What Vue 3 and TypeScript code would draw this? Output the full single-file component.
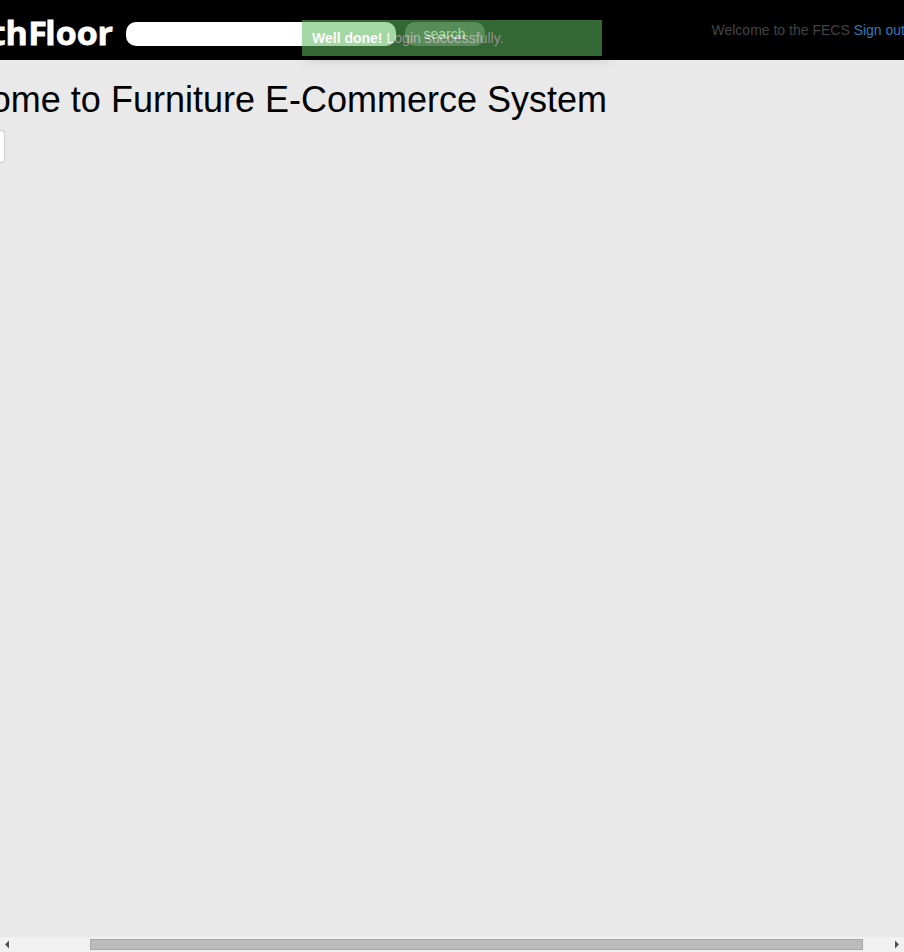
<script setup lang="ts">
import { ref } from 'vue'

const query = ref('')
const username = 'FECS'
</script>

<template>
  <div class="viewport">
    <header class="topbar">
      <div class="brand"><svg width="126" height="60" viewBox="0 0 126 60" role="img"><text class="logo" transform="scale(1.06 1)" x="-8.8 5.3 26.6 42.8 52.6 72.3 92" y="44.8">thFloor</text></svg></div>
      <input v-model="query" class="search-input" type="text" />
      <button class="search-button" type="button">search</button>
      <p class="account">Welcome to the {{ username }} <a>Sign out</a></p>
    </header>
    <main class="content">
      <div class="title-row"><h1>Welcome to Furniture E-Commerce System</h1></div>
      <div class="field"></div>
    </main>
    <div class="scrollbar">
      <svg class="arrow" width="15" height="15" viewBox="0 0 15 15"><path d="M9 3.5v8L5 7.5z" /></svg>
      <div class="track"><div class="thumb"></div></div>
      <svg class="arrow" width="15" height="15" viewBox="0 0 15 15"><path d="M6 3.5v8l4-4z" /></svg>
    </div>
    <div class="toast"><strong>Well done!</strong><span class="message"> Login successfully.</span></div>
  </div>
</template>

<style>
body { margin: 0; overflow: hidden; }
</style>

<style scoped>
.viewport {
  position: relative;
  display: flex;
  flex-direction: column;
  width: 100%;
  height: 952px;
  overflow: hidden;
  background: #e9e9e9;
  font: 14px/20px "Liberation Sans", Arial, sans-serif;
}
.topbar {
  display: flex;
  height: 60px;
  flex: none;
  background: #000;
}
.brand { width: 126px; flex: none; overflow: hidden; }
.brand svg { display: block; overflow: hidden; }
.logo {
  font: bold 32px "Open Sans", sans-serif;
  fill: #fff;
  stroke: #fff;
  stroke-width: .8px;
}
.search-input {
  box-sizing: border-box;
  width: 270px;
  height: 24px;
  flex: none;
  margin: 22px 9px 0 0;
  padding: 0 10px;
  border: 0;
  border-radius: 10px;
  background: #fff;
}
.search-button {
  width: 80px;
  height: 24px;
  flex: none;
  margin: 22px 0 0;
  padding: 0 1px 0 0;
  border: 0;
  border-radius: 10px;
  background: #555;
  color: #fff;
  font: 14px/24px "Liberation Sans", Arial, sans-serif;
}
.account {
  flex: none;
  margin: 20px -1px 0 auto;
  color: #444;
  white-space: nowrap;
}
.account a { color: #337ab7; }
.content { flex: 1; padding-top: 20px; }
.title-row {
  display: flex;
  justify-content: flex-end;
  width: 607px;
}
h1 {
  flex: none;
  margin: 0;
  color: #000;
  font-size: 36px;
  font-weight: 400;
  line-height: 40px;
  white-space: nowrap;
}
.field {
  box-sizing: border-box;
  width: 5px;
  height: 33px;
  margin-top: 10px;
  border: 1px solid #ccc;
  border-left: 0;
  border-radius: 0 4px 4px 0;
  background: #fff;
}
.scrollbar {
  display: flex;
  height: 15px;
  flex: none;
  background: #f1f1f1;
}
.arrow { flex: none; fill: #505050; }
.track { flex: 1; padding: 2px 26px 2px 75px; }
.thumb {
  box-sizing: border-box;
  height: 11px;
  border: 1px solid #a8a8a8;
  background: #bcbcbc;
}
.toast {
  position: absolute;
  top: 20px;
  left: 302px;
  box-sizing: border-box;
  width: 300px;
  height: 36px;
  padding: 8px 10px;
  background: #5cb85c;
  color: #fff;
  opacity: .56;
  box-shadow: 5px 5px 10px rgba(0, 0, 0, .2);
}
.message { letter-spacing: .04px; }
</style>
